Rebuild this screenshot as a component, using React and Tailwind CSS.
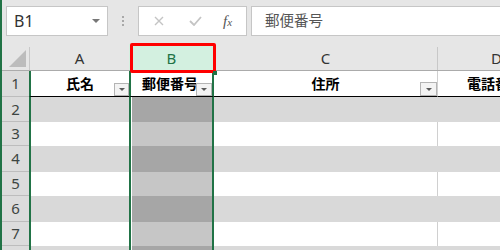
import React from 'react'

const rowHeights = [25, 24, 26, 24, 26, 24, 26]

function FilterBtn({ className }) {
  return (
    <div className={`absolute bottom-0 flex items-center justify-center border border-[#b4b4b4] bg-[#f3f3f3] ${className}`}>
      <div className="border-x-[3px] border-t-[3px] border-x-transparent border-t-[#5a5a5a]" />
    </div>
  )
}

export default function App() {
  return (
    <div className="relative w-[500px] h-[250px] overflow-hidden bg-[#e6e6e6] border-l-2 border-[#217346] font-['Noto_Sans','Noto_Sans_CJK_JP',sans-serif]">
      {/* formula bar */}
      <div className="flex h-[44px] items-start pt-[6px] pl-[4px]">
        <div className="flex h-[30px] w-[102px] shrink-0 items-center justify-between border border-[#c6c6c6] bg-white pl-[7px] pr-[7px]">
          <span className="text-[16px] leading-none text-[#333]">B1</span>
          <div className="border-x-[4px] border-t-[4px] border-x-transparent border-t-[#777]" />
        </div>
        <div className="flex h-[30px] w-[30px] shrink-0 flex-col items-center justify-center gap-[2px]">
          <div className="h-[2px] w-[2px] bg-[#a8a8a8]" />
          <div className="h-[2px] w-[2px] bg-[#a8a8a8]" />
          <div className="h-[2px] w-[2px] bg-[#a8a8a8]" />
        </div>
        <div className="flex h-[30px] w-[109px] shrink-0 items-center border border-[#c6c6c6] bg-white">
          <svg width="10" height="10" viewBox="0 0 10 10" className="ml-[15px]">
            <path d="M1 1 L9 9 M9 1 L1 9" stroke="#c4c4c4" strokeWidth="1.4" />
          </svg>
          <svg width="13" height="10" viewBox="0 0 13 10" className="ml-[25px]">
            <path d="M1 5 L5 9 L12 1" stroke="#c4c4c4" strokeWidth="1.8" fill="none" />
          </svg>
          <span className="ml-[21px] font-['Liberation_Serif',serif] italic text-[15px] leading-none text-[#555]">
            f<span className="text-[11px]">x</span>
          </span>
        </div>
        <div className="ml-[4px] mr-[-20px] flex h-[30px] flex-1 items-center border border-[#c6c6c6] bg-white pl-[13px]">
          <span className="text-[14.5px] text-[#555]">郵便番号</span>
        </div>
      </div>

      {/* column headers */}
      <div className="flex h-[27px] border-b border-[#ababab]">
        <div className="relative h-[23px] w-[28px] shrink-0 self-end border-r border-[#c8c8c8]">
          <svg width="17" height="17" viewBox="0 0 17 17" className="absolute right-[3px] bottom-[3px]">
            <polygon points="17,0 17,17 0,17" fill="#bcbcbc" />
          </svg>
        </div>
        <div className="flex w-[99px] shrink-0 items-center justify-center pt-[2px] text-[15px] text-[#333]">A</div>
        <div className="flex w-[85px] shrink-0 items-center justify-center bg-[#d3f0e0] pt-[2px] text-[15px] text-[#217346]">B</div>
        <div className="flex h-[23px] w-[224px] shrink-0 items-center justify-center self-end border-r border-[#c8c8c8] text-[15px] text-[#333]">C</div>
        <div className="flex min-w-0 flex-1 items-center overflow-hidden pl-[53px] pt-[2px] text-[15px] text-[#333]">D</div>
      </div>

      {/* row 1 */}
      <div className="flex h-[26px]">
        <div className="flex w-[27px] shrink-0 items-center justify-center border-b border-[#bdbdbd] bg-[#dcdcdc] text-[15px] text-[#3d4542]">1</div>
        <div className="relative flex w-[100px] shrink-0 items-center justify-center border-l-2 border-b border-l-[#217346] border-b-black bg-white">
          <span className="text-[14px] font-bold text-black">氏名</span>
          <FilterBtn className="right-0 h-[13px] w-[15px]" />
        </div>
        <div className="relative flex w-[85px] shrink-0 items-center overflow-hidden border-x-2 border-b border-x-[#217346] border-b-black bg-white pl-[11px]">
          <span className="whitespace-nowrap text-[14px] font-bold text-black">郵便番号</span>
          <FilterBtn className="right-0 h-[13px] w-[16px]" />
        </div>
        <div className="relative flex w-[224px] shrink-0 items-center justify-center border-r border-b border-r-[#d0d0d0] border-b-black bg-white">
          <span className="text-[14px] font-bold text-black">住所</span>
          <FilterBtn className="right-0 h-[14px] w-[17px]" />
        </div>
        <div className="flex min-w-0 flex-1 items-center overflow-hidden border-b border-black bg-white pl-[29px]">
          <span className="whitespace-nowrap text-[14px] font-bold text-black">電話番号</span>
        </div>
      </div>

      {/* data rows */}
      {rowHeights.map((h, i) => {
        const even = i % 2 === 0
        return (
          <div key={i} className="flex" style={{ height: h }}>
            <div className="flex w-[27px] shrink-0 items-center justify-center border-b border-[#bdbdbd] bg-[#dcdcdc] text-[15px] text-[#3d4542]">
              {i < 6 ? i + 2 : ''}
            </div>
            <div className={`w-[100px] shrink-0 border-l-2 border-[#217346] ${even ? 'bg-[#d9d9d9]' : 'bg-white'}`} />
            <div className="flex w-[85px] shrink-0 border-x-2 border-[#217346] bg-white pl-[1px]">
              <div className={`flex-1 ${even ? 'bg-[#a6a6a6]' : 'bg-[#c6c6c6]'}`} />
            </div>
            <div className={`w-[224px] shrink-0 border-r ${even ? 'bg-[#d9d9d9] border-[#d9d9d9]' : 'bg-white border-[#d0d0d0]'}`} />
            <div className={`flex-1 ${even ? 'bg-[#d9d9d9]' : 'bg-white'}`} />
          </div>
        )
      })}

      {/* selection highlight on column B header */}
      <div className="absolute left-[128px] top-[43px] h-[30px] w-[86px] rounded-[2px] border-[3px] border-[#ff0000]" />
      <div className="absolute left-[211px] top-[71px] h-[4px] w-[4px] bg-[#217346]" />
    </div>
  )
}
